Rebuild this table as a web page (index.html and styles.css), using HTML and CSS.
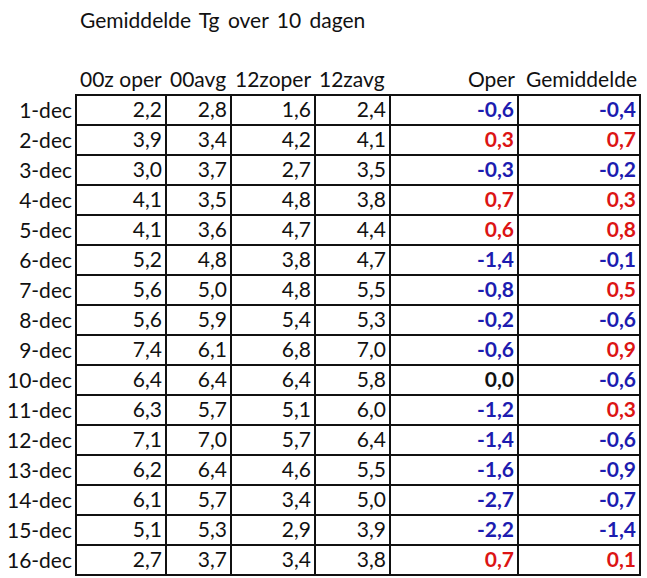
FILE: index.html
```html
<!DOCTYPE html>
<html lang="nl">
<head>
<meta charset="utf-8">
<title>Gemiddelde Tg over 10 dagen</title>
<link rel="stylesheet" href="styles.css">
</head>
<body>
<table class="sheet">
  <colgroup>
    <col class="c-label"><col class="c-a"><col class="c-b"><col class="c-c"><col class="c-d"><col class="c-e"><col class="c-f">
  </colgroup>
  <tr class="title-row"><td></td><td class="title" colspan="6">Gemiddelde Tg over 10 dagen</td></tr>
  <tr class="blank-row"><td colspan="7"></td></tr>
  <tr class="head-row">
    <td></td><td class="hl">00z oper</td><td class="hl">00avg</td><td class="hl">12zoper</td><td class="hl">12zavg</td><td class="hr">Oper</td><td class="hr">Gemiddelde</td>
  </tr>
  <tr><th>1-dec</th><td>2,2</td><td>2,8</td><td>1,6</td><td>2,4</td><td class="neg">-0,6</td><td class="neg">-0,4</td></tr>
  <tr><th>2-dec</th><td>3,9</td><td>3,4</td><td>4,2</td><td>4,1</td><td class="pos">0,3</td><td class="pos">0,7</td></tr>
  <tr><th>3-dec</th><td>3,0</td><td>3,7</td><td>2,7</td><td>3,5</td><td class="neg">-0,3</td><td class="neg">-0,2</td></tr>
  <tr><th>4-dec</th><td>4,1</td><td>3,5</td><td>4,8</td><td>3,8</td><td class="pos">0,7</td><td class="pos">0,3</td></tr>
  <tr><th>5-dec</th><td>4,1</td><td>3,6</td><td>4,7</td><td>4,4</td><td class="pos">0,6</td><td class="pos">0,8</td></tr>
  <tr><th>6-dec</th><td>5,2</td><td>4,8</td><td>3,8</td><td>4,7</td><td class="neg">-1,4</td><td class="neg">-0,1</td></tr>
  <tr><th>7-dec</th><td>5,6</td><td>5,0</td><td>4,8</td><td>5,5</td><td class="neg">-0,8</td><td class="pos">0,5</td></tr>
  <tr><th>8-dec</th><td>5,6</td><td>5,9</td><td>5,4</td><td>5,3</td><td class="neg">-0,2</td><td class="neg">-0,6</td></tr>
  <tr><th>9-dec</th><td>7,4</td><td>6,1</td><td>6,8</td><td>7,0</td><td class="neg">-0,6</td><td class="pos">0,9</td></tr>
  <tr><th>10-dec</th><td>6,4</td><td>6,4</td><td>6,4</td><td>5,8</td><td class="zero">0,0</td><td class="neg">-0,6</td></tr>
  <tr><th>11-dec</th><td>6,3</td><td>5,7</td><td>5,1</td><td>6,0</td><td class="neg">-1,2</td><td class="pos">0,3</td></tr>
  <tr><th>12-dec</th><td>7,1</td><td>7,0</td><td>5,7</td><td>6,4</td><td class="neg">-1,4</td><td class="neg">-0,6</td></tr>
  <tr><th>13-dec</th><td>6,2</td><td>6,4</td><td>4,6</td><td>5,5</td><td class="neg">-1,6</td><td class="neg">-0,9</td></tr>
  <tr><th>14-dec</th><td>6,1</td><td>5,7</td><td>3,4</td><td>5,0</td><td class="neg">-2,7</td><td class="neg">-0,7</td></tr>
  <tr><th>15-dec</th><td>5,1</td><td>5,3</td><td>2,9</td><td>3,9</td><td class="neg">-2,2</td><td class="neg">-1,4</td></tr>
  <tr><th>16-dec</th><td>2,7</td><td>3,7</td><td>3,4</td><td>3,8</td><td class="pos">0,7</td><td class="pos">0,1</td></tr>
</table>
</body>
</html>
```
FILE: styles.css
```css
html, body {
  margin: 0;
  padding: 0;
  background: #fff;
}
body {
  padding-top: 5px;
  font-family: Lato, "Open Sans", "Liberation Sans", sans-serif;
  font-size: 21px;
  color: #111;
}
.sheet {
  border-collapse: collapse;
  table-layout: fixed;
  width: 640px;
}
.c-label { width: 76px; }
.c-a { width: 90px; }
.c-b { width: 65px; }
.c-c { width: 84px; }
.c-d { width: 75px; }
.c-e { width: 128px; }
.c-f { width: 122px; }
.sheet tr { height: 30px; }
.sheet td, .sheet th {
  padding: 0 3px 5px 3px;
  line-height: 20px;
  vertical-align: bottom;
  white-space: nowrap;
  font-weight: normal;
}
.sheet th { text-align: right; }
.sheet tr td { text-align: right; border: 2px solid #111; }
.sheet .title-row td, .sheet .blank-row td, .sheet .head-row td { border: none; }
.sheet td.title { text-align: left; padding-left: 4px; word-spacing: 3px; }
.sheet td.hl { text-align: left; padding-left: 4px; }
.sheet td.hr { text-align: right; }
.sheet td.neg { color: #1c1cb0; font-weight: bold; }
.sheet td.pos { color: #dc1414; font-weight: bold; }
.sheet td.zero { color: #111; font-weight: bold; }
```
